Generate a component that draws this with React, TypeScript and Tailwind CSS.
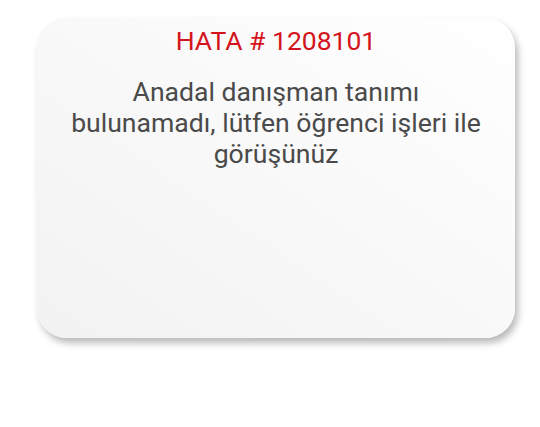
export default function App() {
  return (
    <div className="w-[540px] h-[427px] bg-white pt-[18px] pl-[37px]" style={{ fontFamily: "Roboto, 'Noto Sans', sans-serif" }}>
      <div className="w-[478px] h-[320px] rounded-[30px] bg-gradient-to-tr from-[#f2f2f2] to-white shadow-[3px_5px_7px_rgba(0,0,0,0.28)] flex flex-col items-center px-1 pt-[7px]">
        <div className="text-[26.5px] leading-[32px] text-[#d4141c]">HATA # 1208101</div>
        <div className="mt-[19px] text-[26.6px] leading-[31px] text-[#4a4a4a] text-center">
          Anadal danışman tanımı
          <br />
          bulunamadı, lütfen öğrenci işleri ile
          <br />
          görüşünüz
        </div>
      </div>
    </div>
  );
}
